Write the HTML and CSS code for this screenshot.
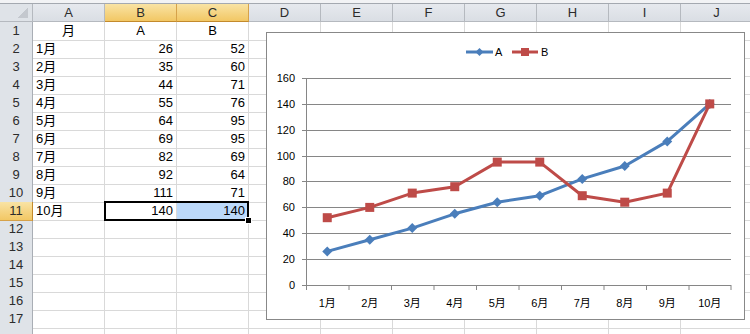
FILE: index.html
```html
<!DOCTYPE html>
<html lang="ja">
<head>
    <meta charset="UTF-8">
    <title>Book1</title>
    <link rel="stylesheet" href="styles.css">
</head>
<body>
    <div class="sheet">
        <div class="topbar"></div>

        <div class="row head">
            <div class="corner"></div>
            <div class="ch">A</div><div class="ch on">B</div><div class="ch on">C</div><div class="ch">D</div><div class="ch">E</div>
            <div class="ch">F</div><div class="ch">G</div><div class="ch">H</div><div class="ch">I</div><div class="ch">J</div>
        </div>

        <div class="row">
            <div class="rh">1</div>
            <div class="c mid">月</div><div class="c mid">A</div><div class="c mid">B</div>
            <div class="c"></div><div class="c"></div><div class="c"></div><div class="c"></div><div class="c"></div><div class="c"></div><div class="c"></div>
        </div>
        <div class="row">
            <div class="rh">2</div>
            <div class="c">1月</div><div class="c num">26</div><div class="c num">52</div>
            <div class="c"></div><div class="c"></div><div class="c"></div><div class="c"></div><div class="c"></div><div class="c"></div><div class="c"></div>
        </div>
        <div class="row">
            <div class="rh">3</div>
            <div class="c">2月</div><div class="c num">35</div><div class="c num">60</div>
            <div class="c"></div><div class="c"></div><div class="c"></div><div class="c"></div><div class="c"></div><div class="c"></div><div class="c"></div>
        </div>
        <div class="row">
            <div class="rh">4</div>
            <div class="c">3月</div><div class="c num">44</div><div class="c num">71</div>
            <div class="c"></div><div class="c"></div><div class="c"></div><div class="c"></div><div class="c"></div><div class="c"></div><div class="c"></div>
        </div>
        <div class="row">
            <div class="rh">5</div>
            <div class="c">4月</div><div class="c num">55</div><div class="c num">76</div>
            <div class="c"></div><div class="c"></div><div class="c"></div><div class="c"></div><div class="c"></div><div class="c"></div><div class="c"></div>
        </div>
        <div class="row">
            <div class="rh">6</div>
            <div class="c">5月</div><div class="c num">64</div><div class="c num">95</div>
            <div class="c"></div><div class="c"></div><div class="c"></div><div class="c"></div><div class="c"></div><div class="c"></div><div class="c"></div>
        </div>
        <div class="row">
            <div class="rh">7</div>
            <div class="c">6月</div><div class="c num">69</div><div class="c num">95</div>
            <div class="c"></div><div class="c"></div><div class="c"></div><div class="c"></div><div class="c"></div><div class="c"></div><div class="c"></div>
        </div>
        <div class="row">
            <div class="rh">8</div>
            <div class="c">7月</div><div class="c num">82</div><div class="c num">69</div>
            <div class="c"></div><div class="c"></div><div class="c"></div><div class="c"></div><div class="c"></div><div class="c"></div><div class="c"></div>
        </div>
        <div class="row">
            <div class="rh">9</div>
            <div class="c">8月</div><div class="c num">92</div><div class="c num">64</div>
            <div class="c"></div><div class="c"></div><div class="c"></div><div class="c"></div><div class="c"></div><div class="c"></div><div class="c"></div>
        </div>
        <div class="row">
            <div class="rh">10</div>
            <div class="c">9月</div><div class="c num">111</div><div class="c num">71</div>
            <div class="c"></div><div class="c"></div><div class="c"></div><div class="c"></div><div class="c"></div><div class="c"></div><div class="c"></div>
        </div>
        <div class="row current">
            <div class="rh on">11</div>
            <div class="c">10月</div><div class="c num">140</div><div class="c num picked">140</div>
            <div class="c"></div><div class="c"></div><div class="c"></div><div class="c"></div><div class="c"></div><div class="c"></div><div class="c"></div>
            <!-- selection B11:C11 -->
            <div class="selection"></div>
            <div class="fill-handle"></div>
        </div>
        <div class="row">
            <div class="rh">12</div>
            <div class="c"></div><div class="c"></div><div class="c"></div><div class="c"></div><div class="c"></div>
            <div class="c"></div><div class="c"></div><div class="c"></div><div class="c"></div><div class="c"></div>
        </div>
        <div class="row">
            <div class="rh">13</div>
            <div class="c"></div><div class="c"></div><div class="c"></div><div class="c"></div><div class="c"></div>
            <div class="c"></div><div class="c"></div><div class="c"></div><div class="c"></div><div class="c"></div>
        </div>
        <div class="row">
            <div class="rh">14</div>
            <div class="c"></div><div class="c"></div><div class="c"></div><div class="c"></div><div class="c"></div>
            <div class="c"></div><div class="c"></div><div class="c"></div><div class="c"></div><div class="c"></div>
        </div>
        <div class="row">
            <div class="rh">15</div>
            <div class="c"></div><div class="c"></div><div class="c"></div><div class="c"></div><div class="c"></div>
            <div class="c"></div><div class="c"></div><div class="c"></div><div class="c"></div><div class="c"></div>
        </div>
        <div class="row">
            <div class="rh">16</div>
            <div class="c"></div><div class="c"></div><div class="c"></div><div class="c"></div><div class="c"></div>
            <div class="c"></div><div class="c"></div><div class="c"></div><div class="c"></div><div class="c"></div>
        </div>
        <div class="row">
            <div class="rh">17</div>
            <div class="c"></div><div class="c"></div><div class="c"></div><div class="c"></div><div class="c"></div>
            <div class="c"></div><div class="c"></div><div class="c"></div><div class="c"></div><div class="c"></div>
        </div>
        <!-- row 18 is cut off by the window -->
        <div class="row">
            <div class="rh"></div>
            <div class="c"></div><div class="c"></div><div class="c"></div><div class="c"></div><div class="c"></div>
            <div class="c"></div><div class="c"></div><div class="c"></div><div class="c"></div><div class="c"></div>
        </div>

        <!-- embedded line chart -->
        <div class="chart">
            <svg width="479" height="288" viewBox="0 0 479 288">
                <rect x="0.5" y="0.5" width="478" height="287" fill="#fff" stroke="#888" />

                <!-- legend -->
                <g class="legend">
                    <line x1="200" y1="20" x2="227" y2="20" stroke="#4a7ebb" stroke-width="3" />
                    <path d="M213.5 16 L217.5 20 L213.5 24 L209.5 20 Z" fill="#4a7ebb" />
                    <text x="229" y="24">A</text>
                    <line x1="246" y1="20" x2="272" y2="20" stroke="#be4b48" stroke-width="3" />
                    <rect x="255" y="16" width="8" height="8" fill="#be4b48" />
                    <text x="275" y="24">B</text>
                </g>

                <!-- gridlines -->
                <g stroke="#868686" stroke-width="1">
                    <line x1="36" y1="46.5" x2="465" y2="46.5" />
                    <line x1="36" y1="72.5" x2="465" y2="72.5" />
                    <line x1="36" y1="98.5" x2="465" y2="98.5" />
                    <line x1="36" y1="124.5" x2="465" y2="124.5" />
                    <line x1="36" y1="149.5" x2="465" y2="149.5" />
                    <line x1="36" y1="175.5" x2="465" y2="175.5" />
                    <line x1="36" y1="201.5" x2="465" y2="201.5" />
                    <line x1="36" y1="227.5" x2="465" y2="227.5" />
                    <line x1="36" y1="253.5" x2="465" y2="253.5" />
                    <line x1="40.5" y1="46" x2="40.5" y2="254" />
                    <!-- category ticks -->
                    <line x1="40.5" y1="253" x2="40.5" y2="258" />
                    <line x1="83" y1="253" x2="83" y2="258" />
                    <line x1="125.5" y1="253" x2="125.5" y2="258" />
                    <line x1="168" y1="253" x2="168" y2="258" />
                    <line x1="210.5" y1="253" x2="210.5" y2="258" />
                    <line x1="253" y1="253" x2="253" y2="258" />
                    <line x1="295.5" y1="253" x2="295.5" y2="258" />
                    <line x1="338" y1="253" x2="338" y2="258" />
                    <line x1="380.5" y1="253" x2="380.5" y2="258" />
                    <line x1="423" y1="253" x2="423" y2="258" />
                    <line x1="465" y1="253" x2="465" y2="258" />
                </g>

                <!-- value axis labels -->
                <g class="axis" text-anchor="end">
                    <text x="29" y="50">160</text>
                    <text x="29" y="76">140</text>
                    <text x="29" y="102">120</text>
                    <text x="29" y="128">100</text>
                    <text x="29" y="153">80</text>
                    <text x="29" y="179">60</text>
                    <text x="29" y="205">40</text>
                    <text x="29" y="231">20</text>
                    <text x="29" y="257">0</text>
                </g>

                <!-- category labels -->
                <g class="axis" text-anchor="middle">
                    <text x="61.25" y="275">1月</text>
                    <text x="103.75" y="275">2月</text>
                    <text x="146.25" y="275">3月</text>
                    <text x="188.75" y="275">4月</text>
                    <text x="231.25" y="275">5月</text>
                    <text x="273.75" y="275">6月</text>
                    <text x="316.25" y="275">7月</text>
                    <text x="358.75" y="275">8月</text>
                    <text x="401.25" y="275">9月</text>
                    <text x="443.75" y="275">10月</text>
                </g>

                <!-- series A -->
                <polyline fill="none" stroke="#4a7ebb" stroke-width="3" stroke-linejoin="round"
                    points="61.25,219.4 103.75,207.7 146.25,196.1 188.75,181.8 231.25,170.2 273.75,163.7 316.25,146.9 358.75,134 401.25,109.4 443.75,71.9" />
                <g fill="#4a7ebb">
                    <path d="M61.25 214.4 l5 5 l-5 5 l-5 -5 Z" />
                    <path d="M103.75 202.7 l5 5 l-5 5 l-5 -5 Z" />
                    <path d="M146.25 191.1 l5 5 l-5 5 l-5 -5 Z" />
                    <path d="M188.75 176.8 l5 5 l-5 5 l-5 -5 Z" />
                    <path d="M231.25 165.2 l5 5 l-5 5 l-5 -5 Z" />
                    <path d="M273.75 158.7 l5 5 l-5 5 l-5 -5 Z" />
                    <path d="M316.25 141.9 l5 5 l-5 5 l-5 -5 Z" />
                    <path d="M358.75 129 l5 5 l-5 5 l-5 -5 Z" />
                    <path d="M401.25 104.4 l5 5 l-5 5 l-5 -5 Z" />
                    <path d="M443.75 66.9 l5 5 l-5 5 l-5 -5 Z" />
                </g>

                <!-- series B -->
                <polyline fill="none" stroke="#be4b48" stroke-width="3" stroke-linejoin="round"
                    points="61.25,185.7 103.75,175.4 146.25,161.1 188.75,154.7 231.25,130.1 273.75,130.1 316.25,163.7 358.75,170.2 401.25,161.1 443.75,71.9" />
                <g fill="#be4b48">
                    <rect x="56.75" y="181.2" width="9" height="9" />
                    <rect x="99.25" y="170.9" width="9" height="9" />
                    <rect x="141.75" y="156.6" width="9" height="9" />
                    <rect x="184.25" y="150.2" width="9" height="9" />
                    <rect x="226.75" y="125.6" width="9" height="9" />
                    <rect x="269.25" y="125.6" width="9" height="9" />
                    <rect x="311.75" y="159.2" width="9" height="9" />
                    <rect x="354.25" y="165.7" width="9" height="9" />
                    <rect x="396.75" y="156.6" width="9" height="9" />
                    <rect x="439.25" y="67.4" width="9" height="9" />
                </g>
            </svg>
        </div>
    </div>
</body>
</html>
```

FILE: styles.css
```css
html, body {
    margin: 0;
    padding: 0;
    height: 100%;
    overflow: hidden;
    background: #ffffff;
    font-family: 'Liberation Sans', 'Noto Sans CJK JP', sans-serif;
}

.sheet {
    position: relative;
    width: 760px;
}

.topbar {
    height: 3px;
    background: #f2f3f5;
    border-bottom: 1px solid #a4a9b0;
}

/* one spreadsheet row */
.row {
    display: grid;
    grid-template-columns: 33px repeat(10, 72px);
    height: 18px;
}

.row.current {
    position: relative;
}

/* column headers */
.corner {
    box-sizing: border-box;
    border-right: 1px solid #b5b9bf;
    border-bottom: 1px solid #b5b9bf;
    background-color: #dfe3e8;
    background-image: linear-gradient(135deg, transparent 50%, #c4c8ce 50%);
    background-size: 10px 10px;
    background-repeat: no-repeat;
    background-position: right 4px bottom 3px;
}

.ch {
    box-sizing: border-box;
    border-right: 1px solid #b5b9bf;
    border-bottom: 1px solid #b5b9bf;
    background: linear-gradient(#e6e9ee, #dadee4);
    color: #2c2c2c;
    font-size: 13px;
    line-height: 17px;
    text-align: center;
}

.ch.on {
    background: linear-gradient(#f9e3a4, #f2c764);
    border-right-color: #d6a24a;
    border-bottom: 1px solid #c38a2c;
}

/* row headers */
.rh {
    box-sizing: border-box;
    border-right: 1px solid #a9aeb5;
    border-bottom: 1px solid #c6cad0;
    background: #dfe3e8;
    color: #2c2c2c;
    font-size: 13px;
    line-height: 18px;
    text-align: center;
}

.rh.on {
    background: linear-gradient(#f9e3a4, #f2c764);
    border-right-color: #c38a2c;
    border-bottom-color: #d6a24a;
}

/* cells */
.c {
    box-sizing: border-box;
    border-right: 1px solid #d9d9d9;
    border-bottom: 1px solid #d9d9d9;
    padding: 0 3px;
    color: #000;
    font-size: 13px;
    line-height: 18px;
    white-space: nowrap;
    overflow: hidden;
}

.num {
    text-align: right;
}

.mid {
    text-align: center;
}

.picked {
    background: #bcd9fa;
}

.selection {
    position: absolute;
    left: 104px;
    top: -1px;
    width: 145px;
    height: 20px;
    box-sizing: border-box;
    border: 2px solid #000;
    pointer-events: none;
}

.fill-handle {
    position: absolute;
    left: 246px;
    top: 16px;
    width: 5px;
    height: 5px;
    background: #000;
    border: 1px solid #fff;
    box-sizing: content-box;
    margin: -1px 0 0 -1px;
}

/* chart */
.chart {
    position: absolute;
    left: 266px;
    top: 32px;
    width: 479px;
    height: 288px;
}

.chart svg {
    display: block;
}

.chart text {
    font-family: 'Liberation Sans', 'Noto Sans CJK JP', sans-serif;
    font-size: 11px;
    fill: #000;
}
```
